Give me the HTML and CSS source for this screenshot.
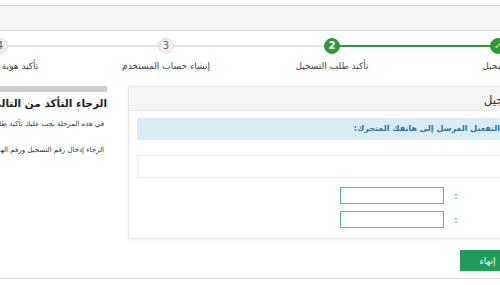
FILE: index.html
```html
<!DOCTYPE html>
<html lang="ar">
<head>
<meta charset="utf-8">
<title>التسجيل</title>
<link rel="stylesheet" href="styles.css">
</head>
<body>
<div class="page">
  <div class="topbar"></div>

  <ol class="steps">
    <li class="step done full"><span class="dot">&#10003;</span><span class="label">التسجيل</span></li>
    <li class="step done half"><span class="dot">2</span><span class="label">تأكيد طلب التسجيل</span></li>
    <li class="step"><span class="dot">3</span><span class="label">إنشاء حساب المستخدم</span></li>
    <li class="step"><span class="dot">4</span><span class="label">تأكيد هوية المستخدم</span></li>
  </ol>

  <div class="content">
    <section class="panel">
      <div class="panel-head">تأكيد طلب التسجيل</div>
      <div class="panel-body">
        <div class="alert">الرجاء إدخال رمز التفعيل المرسل إلى هاتفك المتحرك:</div>
        <div class="box"></div>
        <div class="form-row">
          <span class="field-label">رقم التسجيل</span>
          <span class="colon">:</span>
          <input class="field" type="text">
        </div>
        <div class="form-row">
          <span class="field-label">رمز التفعيل</span>
          <span class="colon">:</span>
          <input class="field" type="text">
        </div>
      </div>
    </section>

    <aside class="sidebar">
      <div class="side-bar"></div>
      <h2 class="side-title">الرجاء التأكد من التالي:</h2>
      <p class="side-text">في هذه المرحلة يجب عليك تأكيد طلب التسجيل</p>
      <p class="side-text">الرجاء إدخال رقم التسجيل ورقم الهوية الوطنية</p>
    </aside>
  </div>

  <div class="actions">
    <button class="btn" type="button">إنهاء</button>
  </div>
  <div class="footer-line"></div>
</div>
</body>
</html>
```

FILE: styles.css
```css
html, body {
  margin: 0;
  padding: 0;
  background: #fff;
  overflow: hidden;
}

body {
  font-family: "DejaVu Sans", "Noto Sans", sans-serif;
  color: #333;
  width: 500px;
  height: 285px;
}

.page {
  width: 820px;
  margin-left: -83px;
  direction: rtl;
}

.topbar {
  margin-top: 5px;
  height: 24px;
  background: #f5f5f5;
  border-top: 1px solid #dcdcdc;
  border-bottom: 1px solid #dcdcdc;
}

.steps {
  list-style: none;
  margin: 0;
  padding: 7px 0 0;
  display: grid;
  grid-template-columns: repeat(4, 166px);
  justify-content: end;
  height: 48px;
}

.step {
  position: relative;
  display: flex;
  flex-direction: column;
  align-items: center;
}

.step::before {
  content: "";
  position: absolute;
  top: 7px;
  left: 0;
  right: 0;
  height: 2px;
  background: #e4e4e4;
}

.step.full::before {
  background: #2c9a3a;
}

.step.half::before {
  background: linear-gradient(to left, #2c9a3a 50%, #e4e4e4 50%);
}

.dot {
  position: relative;
  z-index: 1;
  width: 16px;
  height: 16px;
  border-radius: 50%;
  box-sizing: border-box;
  background: #eeeeee;
  border: 1px solid #dddddd;
  color: #666;
  font-size: 10px;
  line-height: 14px;
  text-align: center;
  font-family: "DejaVu Sans", sans-serif;
}

.step.done .dot {
  background: #2c9a3a;
  border-color: #2c9a3a;
  color: #fff;
  font-weight: bold;
}

.step.full .dot {
  color: #e8e26a;
}

.label {
  margin-top: 7px;
  font-size: 9px;
  color: #444;
  white-space: nowrap;
}

.content {
  display: flex;
  gap: 21px;
}

.panel {
  flex: 1;
  box-sizing: border-box;
  border: 1px solid #e6e6e6;
  box-shadow: 0 1px 2px rgba(0, 0, 0, 0.06);
  height: 153px;
}

.panel-head {
  height: 23px;
  background: #f5f5f5;
  border-bottom: 1px solid #ececec;
  padding-right: 155px;
  font-size: 12px;
  line-height: 26px;
  color: #333;
  white-space: nowrap;
}

.panel-body {
  padding: 7px 8px 0;
}

.alert {
  height: 22px;
  background: #d9edf7;
  color: #31708f;
  font-weight: bold;
  font-size: 8px;
  line-height: 22px;
  padding-right: 159px;
  white-space: nowrap;
  overflow: hidden;
}

.box {
  height: 21px;
  margin-top: 15px;
  border: 1px solid #ececec;
}

.form-row {
  display: flex;
  align-items: center;
  margin-top: 9px;
}

.form-row + .form-row {
  margin-top: 7px;
}

.field-label {
  width: 268px;
  font-size: 9px;
  white-space: nowrap;
  overflow: hidden;
}

.colon {
  width: 8px;
  text-align: center;
  font-size: 10px;
  color: #555;
}

.field {
  margin: 0 8px 0 0;
  width: 104px;
  height: 17px;
  box-sizing: border-box;
  border: 1px solid #5bb596;
  padding: 0;
  background: #fff;
}

.sidebar {
  width: 190px;
  overflow: hidden;
}

.side-bar {
  height: 6px;
  background: #cfcfcf;
}

.side-title {
  margin: 2px 0 0;
  font-size: 10.5px;
  font-weight: bold;
  color: #222;
  white-space: nowrap;
  line-height: 18px;
}

.side-text {
  margin: 6px 3px 0 0;
  font-size: 7px;
  color: #333;
  white-space: nowrap;
  line-height: 12px;
}

.side-text + .side-text {
  margin-top: 14px;
}

.actions {
  display: flex;
  padding-right: 222px;
  margin-top: 11px;
}

.btn {
  width: 55px;
  height: 21px;
  border: none;
  background: #1f9d58;
  color: #fff;
  font-family: "DejaVu Sans", sans-serif;
  font-size: 9px;
  padding: 0;
}

.footer-line {
  margin-top: 7px;
  border-top: 1px solid #dcdcdc;
}
```
